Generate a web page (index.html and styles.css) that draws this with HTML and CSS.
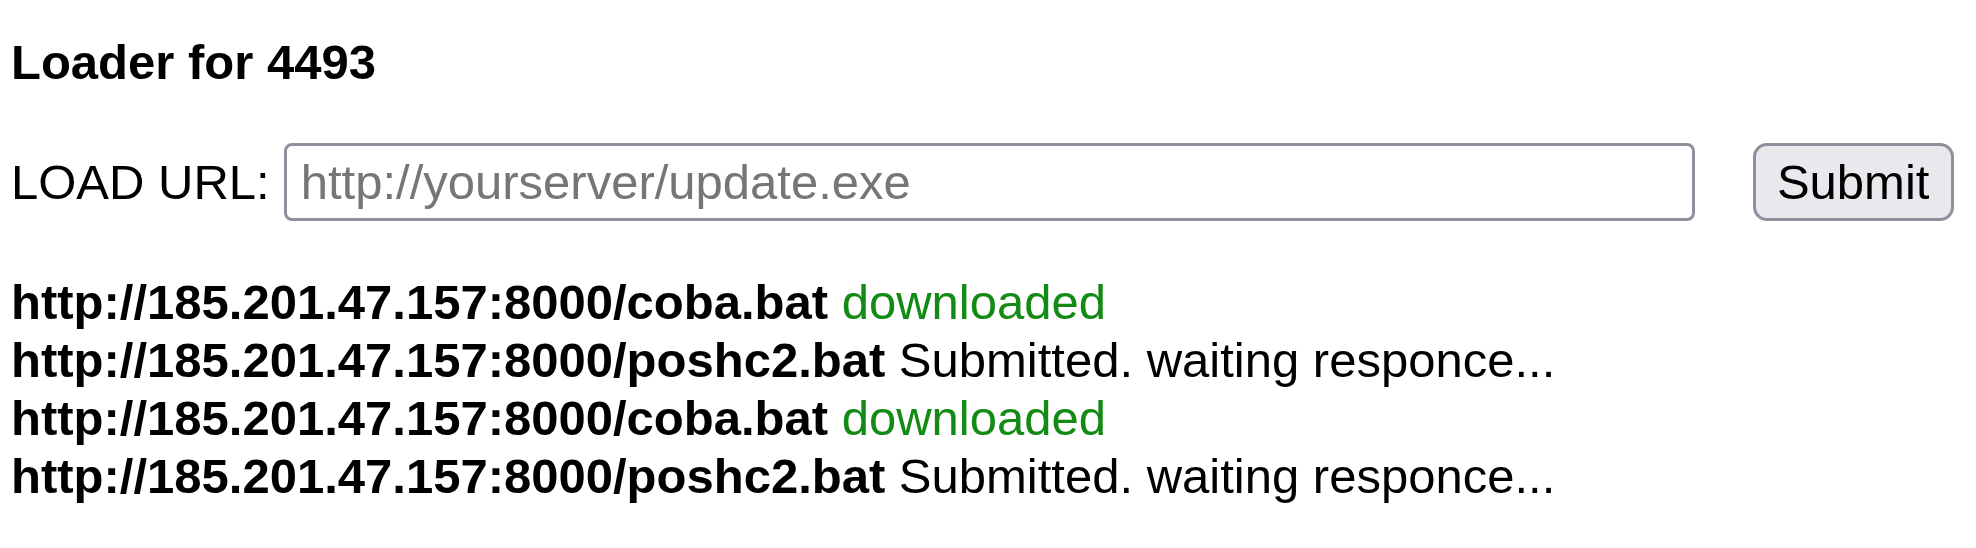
FILE: index.html
```html
<!DOCTYPE html>
<html lang="en">
    <head>
        <meta charset="UTF-8">
        <title>Loader</title>
        <link rel="stylesheet" href="styles.css">
    </head>
    <body>
        <div class="page">
            <h1 class="title">Loader for 4493</h1>
            <form class="loadForm" onsubmit="return false">
                <label class="loadLabel" for="url">LOAD URL:</label>
                <input class="urlBox" id="url" placeholder="http://yourserver/update.exe">
                <button class="submitButton">Submit</button>
            </form>
            <div class="log">
                <div><b>http://185.201.47.157:8000/coba.bat</b> <span class="ok">downloaded</span></div>
                <div><b>http://185.201.47.157:8000/poshc2.bat</b> Submitted. waiting responce...</div>
                <div><b>http://185.201.47.157:8000/coba.bat</b> <span class="ok">downloaded</span></div>
                <div><b>http://185.201.47.157:8000/poshc2.bat</b> Submitted. waiting responce...</div>
            </div>
        </div>
    </body>
</html>
```

FILE: styles.css
```css
body {
    margin: 0;
    background: #ffffff;
    color: #000000;
    font-family: "Liberation Sans", Arial, sans-serif;
    font-size: 49px;
    line-height: 58px;
}
.page {
    padding: 33px 0 0 11px;
}
h1.title {
    margin: 0;
    font-size: 49px;
    font-weight: bold;
    line-height: 58px;
}
.loadForm {
    display: flex;
    align-items: center;
    margin-top: 52px;
    height: 78px;
}
.loadLabel {
    margin-right: 14px;
}
input.urlBox {
    box-sizing: border-box;
    width: 1411px;
    height: 78px;
    padding: 0 14px;
    border: 3px solid #8f8f9d;
    border-radius: 8px;
    font-family: inherit;
    font-size: 49px;
    color: #000000;
    outline: none;
}
input.urlBox::placeholder {
    color: #767676;
    opacity: 1;
}
button.submitButton {
    box-sizing: border-box;
    width: 201px;
    height: 78px;
    margin-left: 58px;
    padding: 0;
    border: 3px solid #8f8f9d;
    border-radius: 14px;
    background-color: #e9e9ed;
    font-family: inherit;
    font-size: 49px;
    color: #000000;
}
.log {
    margin-top: 52px;
}
.ok {
    color: #138a13;
}
```
